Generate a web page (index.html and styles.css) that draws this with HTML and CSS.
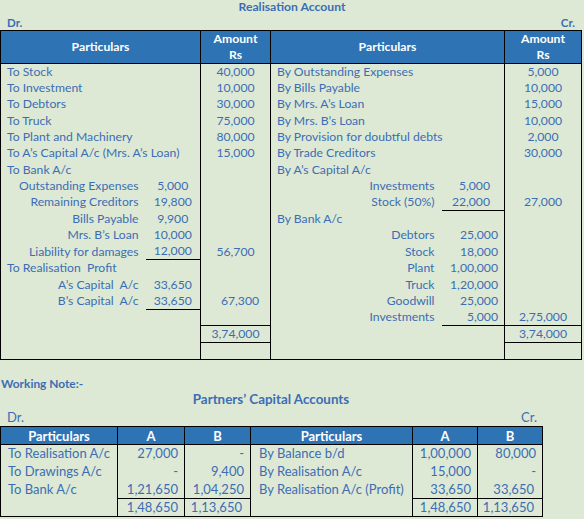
FILE: index.html
```html
<!DOCTYPE html>
<html>
<head>
<meta charset="utf-8">
<link rel="stylesheet" href="styles.css">
</head>
<body>
<div class="title">Realisation Account</div>
<div class="drcr"><span>Dr.</span><span>Cr.</span></div>
<table class="ra">
  <colgroup>
    <col class="w-ll"><col class="w-ls"><col class="w-la"><col class="w-rl"><col class="w-rs"><col class="w-ra">
  </colgroup>
  <tr class="hd">
    <th colspan="2">Particulars</th><th>Amount<br>Rs</th><th colspan="2">Particulars</th><th>Amount<br>Rs</th>
  </tr>
  <tr><td colspan="2" class="lab">To Stock</td><td class="amt">40,000</td><td colspan="2" class="lab">By Outstanding Expenses</td><td class="amt r">5,000</td></tr>
  <tr><td colspan="2" class="lab">To Investment</td><td class="amt">10,000</td><td colspan="2" class="lab">By Bills Payable</td><td class="amt r">10,000</td></tr>
  <tr><td colspan="2" class="lab">To Debtors</td><td class="amt">30,000</td><td colspan="2" class="lab">By Mrs. A’s Loan</td><td class="amt r">15,000</td></tr>
  <tr><td colspan="2" class="lab">To Truck</td><td class="amt">75,000</td><td colspan="2" class="lab">By Mrs. B’s Loan</td><td class="amt r">10,000</td></tr>
  <tr><td colspan="2" class="lab">To Plant and Machinery</td><td class="amt">80,000</td><td colspan="2" class="lab">By Provision for doubtful debts</td><td class="amt r">2,000</td></tr>
  <tr><td colspan="2" class="lab">To A’s Capital A/c (Mrs. A’s Loan)</td><td class="amt">15,000</td><td colspan="2" class="lab">By Trade Creditors</td><td class="amt r">30,000</td></tr>
  <tr><td colspan="2" class="lab">To Bank A/c</td><td class="amt"></td><td colspan="2" class="lab">By A’s Capital A/c</td><td class="amt r"></td></tr>
  <tr><td class="lab sl">Outstanding Expenses</td><td class="sub">5,000</td><td class="amt"></td><td class="sl">Investments</td><td class="sub rs1">5,000</td><td class="amt r"></td></tr>
  <tr><td class="lab sl">Remaining Creditors</td><td class="sub">19,800</td><td class="amt"></td><td class="sl">Stock (50%)</td><td class="sub rs1 ul">22,000</td><td class="amt r">27,000</td></tr>
  <tr><td class="lab sl">Bills Payable</td><td class="sub">9,900</td><td class="amt"></td><td colspan="2" class="lab">By Bank A/c</td><td class="amt r"></td></tr>
  <tr><td class="lab sl">Mrs. B’s Loan</td><td class="sub">10,000</td><td class="amt"></td><td class="sl">Debtors</td><td class="sub rs2">25,000</td><td class="amt r"></td></tr>
  <tr><td class="lab sl">Liability for damages</td><td class="sub ul">12,000</td><td class="amt">56,700</td><td class="sl">Stock</td><td class="sub rs2">18,000</td><td class="amt r"></td></tr>
  <tr><td colspan="2" class="lab">To Realisation&nbsp; Profit</td><td class="amt"></td><td class="sl">Plant</td><td class="sub rs2">1,00,000</td><td class="amt r"></td></tr>
  <tr><td class="lab sl">A’s Capital&nbsp; A/c</td><td class="sub">33,650</td><td class="amt"></td><td class="sl">Truck</td><td class="sub rs2">1,20,000</td><td class="amt r"></td></tr>
  <tr><td class="lab sl">B’s Capital&nbsp; A/c</td><td class="sub ul">33,650</td><td class="amt shift">67,300</td><td class="sl">Goodwill</td><td class="sub rs2">25,000</td><td class="amt r"></td></tr>
  <tr><td class="lab"></td><td></td><td class="amt"></td><td class="sl">Investments</td><td class="sub rs2 ul">5,000</td><td class="amt r">2,75,000</td></tr>
  <tr class="tot"><td class="lab"></td><td></td><td class="amt bt">3,74,000</td><td></td><td></td><td class="amt r bt">3,74,000</td></tr>
  <tr class="tot last"><td class="lab"></td><td></td><td class="amt bt"></td><td></td><td></td><td class="amt r bt"></td></tr>
</table>

<div class="wn">Working Note:-</div>
<div class="pc">
  <div class="pc-title">Partners’ Capital Accounts</div>
  <div class="drcr2"><span>Dr.</span><span>Cr.</span></div>
  <table class="cap">
    <colgroup>
      <col class="c1"><col class="c2"><col class="c3"><col class="c4"><col class="c5"><col class="c6">
    </colgroup>
    <tr class="hd2"><th>Particulars</th><th>A</th><th>B</th><th>Particulars</th><th>A</th><th>B</th></tr>
    <tr><td class="p">To Realisation A/c</td><td class="n">27,000</td><td class="n">-</td><td class="p">By Balance b/d</td><td class="n">1,00,000</td><td class="n">80,000</td></tr>
    <tr><td class="p">To Drawings A/c</td><td class="n">-</td><td class="n">9,400</td><td class="p">By Realisation A/c</td><td class="n">15,000</td><td class="n">-</td></tr>
    <tr><td class="p">To Bank A/c</td><td class="n">1,21,650</td><td class="n">1,04,250</td><td class="p">By Realisation A/c (Profit)</td><td class="n">33,650</td><td class="n x">33,650</td></tr>
    <tr class="t2"><td class="p"></td><td class="n bt">1,48,650</td><td class="n bt x">1,13,650</td><td class="p"></td><td class="n bt">1,48,650</td><td class="n bt x">1,13,650</td></tr>
  </table>
</div>
</body>
</html>
```

FILE: styles.css
```css
html, body {
  margin: 0;
  padding: 0;
  background: #dde9d5;
}
body {
  width: 584px;
  height: 519px;
  overflow: hidden;
  font-family: "Lato", "Liberation Sans", sans-serif;
  color: #3c6db4;
  font-size: 12.2px;
}
.title {
  height: 15px;
  line-height: 14px;
  text-align: center;
  font-weight: bold;
}
.drcr {
  display: flex;
  justify-content: space-between;
  height: 15px;
  line-height: 16px;
  padding: 0 9px 0 7px;
  font-weight: bold;
  font-size: 11.5px;
}
table {
  border-collapse: collapse;
  table-layout: fixed;
}
.ra {
  width: 582px;
}
.w-ll { width: 145px; }
.w-ls { width: 55px; }
.w-la { width: 70px; }
.w-rl { width: 171px; }
.w-rs { width: 63px; }
.w-ra { width: 77px; }
td, th {
  padding: 0;
  white-space: nowrap;
  overflow: visible;
}
.ra .hd th {
  background: #2e74b5;
  color: #fff;
  border: 1px solid #000;
  height: 32px;
  line-height: 16px;
  font-weight: bold;
  text-align: center;
}
.ra tr { height: 16.3px; }
.ra td { line-height: 16px; }
.ra .lab { border-left: 1px solid #000; padding-left: 6px; }
.ra td.lab[colspan]:nth-child(3), .ra td:nth-child(3).lab { border-left: none; }
.ra .sl { text-align: right; padding-right: 7px; }
.ra td.lab.sl { padding-left: 0; }
.ra .sub { text-align: center; }
.ra .sub.rs1 { text-align: right; padding-right: 14px; }
.ra .sub.rs2 { text-align: right; padding-right: 6px; }
.ra .ul { border-bottom: 1px solid #000; }
.ra .amt {
  text-align: center;
  border-left: 1px solid #000;
  border-right: 1px solid #000;
}
.ra .amt.shift { padding-left: 9px; }
.ra .tot { height: 17px; }
.ra .bt { border-top: 1px solid #000; border-bottom: 1px solid #000; }
.ra .last td { border-bottom: 1px solid #000; }

.wn {
  margin-top: 17px;
  padding-left: 1px;
  font-weight: bold;
  height: 15px;
  line-height: 14px;
  font-size: 11.9px;
}
.pc { width: 542px; }
.pc-title {
  text-align: center;
  font-weight: bold;
  font-size: 13.4px;
  height: 16px;
  line-height: 14px;
}
.drcr2 {
  display: flex;
  justify-content: space-between;
  padding: 0 5px 0 7px;
  font-size: 13px;
  height: 18px;
  line-height: 18px;
}
.cap {
  width: 543px;
  font-size: 13px;
}
.c1 { width: 117px; }
.c2 { width: 67px; }
.c3 { width: 66px; }
.c4 { width: 162px; }
.c5 { width: 65px; }
.c6 { width: 65px; }
.cap th {
  background: #2e74b5;
  color: #fff;
  border: 1px solid #000;
  height: 16px;
  line-height: 16px;
  text-align: center;
  font-weight: bold;
}
.cap tr { height: 18px; }
.cap td {
  border-left: 1px solid #000;
  border-right: 1px solid #000;
  line-height: 17px;
}
.cap .p { padding-left: 7px; }
.cap td:nth-child(4).p { padding-left: 8px; }
.cap .n { text-align: right; padding-right: 6px; }
.cap .n.x { padding-right: 8px; }
.cap .bt { border-top: 1px solid #000; }
.cap .t2 td { border-bottom: 1px solid #000; }
```
